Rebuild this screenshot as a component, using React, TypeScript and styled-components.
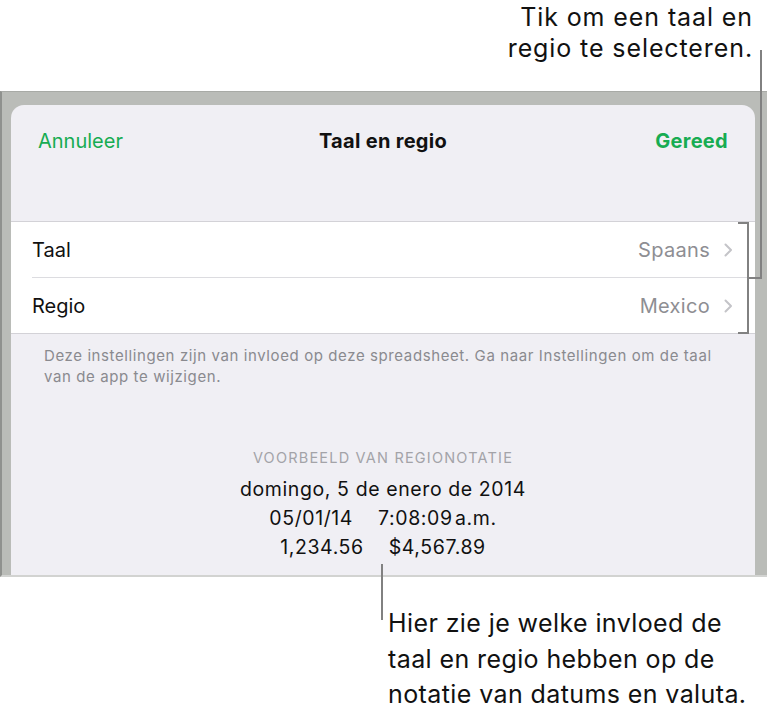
import React from "react";
import styled, { createGlobalStyle } from "styled-components";

const Global = createGlobalStyle`
  html, body { margin: 0; padding: 0; background: #ffffff; }
  body { font-family: Inter, Roboto, "Liberation Sans", sans-serif; color: #000; -webkit-font-smoothing: antialiased; }
`;

const Page = styled.div`
  position: relative;
  width: 777px;
  height: 716px;
  background: #fff;
  overflow: hidden;
`;

const TopCallout = styled.div`
  height: 91px;
  box-sizing: border-box;
  padding: 2px 24px 0 0;
  text-align: right;
  font-size: 25px;
  letter-spacing: 0.9px;
  line-height: 31px;
  color: #111;
`;

const Frame = styled.div`
  width: 767px;
  height: 486px;
  box-sizing: border-box;
  background: #babcb8;
  border-top: 1px solid #a8aaa6;
  border-left: 2px solid #8f918e;
  border-bottom: 2px solid #d2d3d1;
  padding: 13px 12px 0 9px;
`;

const Sheet = styled.div`
  height: 470px;
  background: #f0eff4;
  border-radius: 13px 13px 0 0;
  overflow: hidden;
`;

const Header = styled.div`
  height: 72px;
  display: grid;
  grid-template-columns: 1fr auto 1fr;
  align-items: center;
  padding: 0 27px;
  margin-bottom: 44px;
`;

const NavButton = styled.span<{ $bold?: boolean; $right?: boolean }>`
  color: #17ac52;
  font-size: 20px;
  font-weight: ${(p) => (p.$bold ? 700 : 400)};
  letter-spacing: ${(p) => (p.$bold ? "0.3px" : "0")};
  justify-self: ${(p) => (p.$right ? "end" : "start")};
`;

const Title = styled.span`
  font-size: 20px;
  font-weight: 700;
  letter-spacing: 0.3px;
  color: #111;
`;

const Group = styled.div`
  background: #fff;
  border-top: 1px solid #d3d2d7;
  border-bottom: 1px solid #d3d2d7;
`;

const Row = styled.div<{ $divider?: boolean }>`
  height: 55px;
  display: flex;
  align-items: center;
  margin-left: 21px;
  padding-right: 22px;
  border-bottom: ${(p) => (p.$divider ? "1px solid #dcdce0" : "none")};
`;

const RowLabel = styled.span`
  flex: 1;
  font-size: 20px;
  color: #111;
`;

const RowValue = styled.span`
  font-size: 20px;
  letter-spacing: 0.3px;
  color: #8e8e93;
  margin-right: 14px;
`;

const Footnote = styled.p`
  margin: 0;
  padding: 11px 10px 0 33px;
  font-size: 15px;
  letter-spacing: 0.6px;
  line-height: 21px;
  color: #8a8a8f;
`;

const Preview = styled.div`
  margin-top: 62px;
  display: flex;
  flex-direction: column;
  align-items: center;
`;

const PreviewLabel = styled.div`
  font-size: 14.5px;
  letter-spacing: 1.2px;
  color: #a3a3a8;
  margin-bottom: 9px;
`;

const PreviewLine = styled.div`
  font-size: 19.5px;
  letter-spacing: 0.6px;
  line-height: 29px;
  color: #111;
  display: flex;
  gap: 25px;
`;

const BottomCallout = styled.div`
  padding: 29px 0 0 388px;
  font-size: 25px;
  letter-spacing: 0.4px;
  line-height: 35.5px;
  color: #111;
  white-space: nowrap;
`;

const Line = styled.div<{ $x: number; $y: number; $w: number; $h: number }>`
  position: absolute;
  left: ${(p) => p.$x}px;
  top: ${(p) => p.$y}px;
  width: ${(p) => p.$w}px;
  height: ${(p) => p.$h}px;
  background: #818181;
`;

const Chevron = () => (
  <svg width="9" height="14" viewBox="0 0 9 14">
    <polyline points="1.5,1.5 7,7 1.5,12.5" fill="none" stroke="#c4c4c8" strokeWidth="2" strokeLinecap="round" strokeLinejoin="round" />
  </svg>
);

export default function App() {
  return (
    <Page>
      <Global />
      <TopCallout>
        Tik om een taal en
        <br />
        regio te selecteren.
      </TopCallout>
      <Frame>
        <Sheet>
          <Header>
            <NavButton>Annuleer</NavButton>
            <Title>Taal en regio</Title>
            <NavButton $bold $right>
              Gereed
            </NavButton>
          </Header>
          <Group>
            <Row $divider>
              <RowLabel>Taal</RowLabel>
              <RowValue>Spaans</RowValue>
              <Chevron />
            </Row>
            <Row>
              <RowLabel>Regio</RowLabel>
              <RowValue>Mexico</RowValue>
              <Chevron />
            </Row>
          </Group>
          <Footnote>
            Deze instellingen zijn van invloed op deze spreadsheet. Ga naar Instellingen om de taal
            <br />
            van de app te wijzigen.
          </Footnote>
          <Preview>
            <PreviewLabel>VOORBEELD VAN REGIONOTATIE</PreviewLabel>
            <PreviewLine>domingo, 5 de enero de 2014</PreviewLine>
            <PreviewLine>
              <span>05/01/14</span>
              <span>7:08:09&#8202;a.m.</span>
            </PreviewLine>
            <PreviewLine>
              <span>1,234.56</span>
              <span>$4,567.89</span>
            </PreviewLine>
          </Preview>
        </Sheet>
      </Frame>
      <BottomCallout>
        Hier zie je welke invloed de
        <br />
        taal en regio hebben op de
        <br />
        notatie van datums en valuta.
      </BottomCallout>

      <Line $x={760} $y={50} $w={2} $h={229} />
      <Line $x={747} $y={277} $w={15} $h={2} />
      <Line $x={747} $y={222} $w={2} $h={112} />
      <Line $x={738} $y={222} $w={10} $h={2} />
      <Line $x={738} $y={332} $w={10} $h={2} />
      <Line $x={381} $y={564} $w={2} $h={56} />
    </Page>
  );
}
